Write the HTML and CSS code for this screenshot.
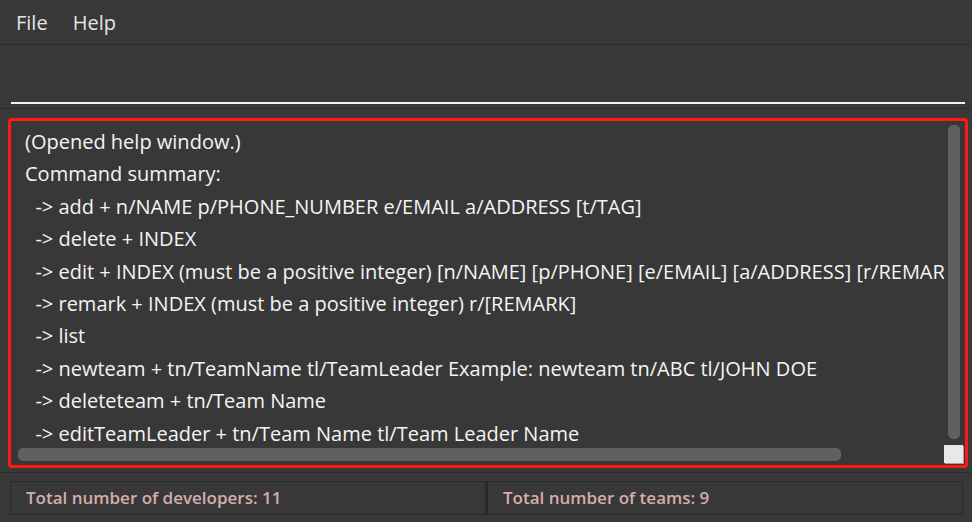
FILE: index.html
```html
<!DOCTYPE html>
<html>
<head>
<meta charset="utf-8">
<link rel="stylesheet" href="styles.css">
</head>
<body>
<div class="app">
  <div class="menubar">
    <span class="menu-item">File</span>
    <span class="menu-item">Help</span>
  </div>
  <div class="command-box">
    <div class="command-input"></div>
  </div>
  <div class="result-box">
    <div class="result-text">(Opened help window.)
Command summary:
  -&gt; add + n/NAME p/PHONE_NUMBER e/EMAIL a/ADDRESS [t/TAG]
  -&gt; delete + INDEX
  -&gt; edit + INDEX (must be a positive integer) [n/NAME] [p/PHONE] [e/EMAIL] [a/ADDRESS] [r/REMARK] [t/TAG]
  -&gt; remark + INDEX (must be a positive integer) r/[REMARK]
  -&gt; list
  -&gt; newteam + tn/TeamName tl/TeamLeader Example: newteam tn/ABC tl/JOHN DOE
  -&gt; deleteteam + tn/Team Name
  -&gt; editTeamLeader + tn/Team Name tl/Team Leader Name</div>
    <div class="vscroll"></div>
    <div class="hscroll"></div>
    <div class="corner"></div>
  </div>
  <div class="statusbar">
    <div class="status-cell">Total number of developers: 11</div>
    <div class="status-cell">Total number of teams: 9</div>
  </div>
</div>
</body>
</html>
```
FILE: styles.css
```css
html, body {
  margin: 0;
  padding: 0;
  background: #383838;
}
.app {
  width: 972px;
  height: 522px;
  display: flex;
  flex-direction: column;
  font-family: "Open Sans", "Noto Sans", sans-serif;
  overflow: hidden;
}
.menubar {
  height: 44px;
  display: flex;
  align-items: center;
  gap: 25px;
  padding-left: 16px;
  border-bottom: 1px solid #2d2d2d;
}
.menu-item {
  color: #e6e6e6;
  font-size: 20px;
}
.command-box {
  height: 63px;
  padding: 0 7px 0 11px;
  border-bottom: 1px solid #2d2d2d;
  display: flex;
  align-items: flex-end;
}
.command-input {
  flex: 1;
  height: 4px;
  border-top: 2px solid #f0f0f0;
}
.result-box {
  position: relative;
  margin: 9px 4px 0 8px;
  height: 344px;
  border: 3px solid #ff1a10;
  border-radius: 4px;
  background: #383838;
  overflow: hidden;
}
.result-text {
  white-space: pre;
  color: #f4f4f4;
  font-size: 20px;
  line-height: 32.4px;
  padding: 5px 0 0 14px;
  width: 919px;
  height: 322px;
  overflow: hidden;
}
.vscroll {
  position: absolute;
  left: 937px;
  top: 4px;
  width: 12px;
  height: 314px;
  background: #606060;
  border-radius: 5px;
}
.hscroll {
  position: absolute;
  left: 7px;
  top: 327px;
  width: 823px;
  height: 13px;
  background: #606060;
  border-radius: 5px;
}
.corner {
  position: absolute;
  left: 933px;
  top: 324px;
  width: 19px;
  height: 18px;
  background: #e8e8e8;
  box-shadow: 1px 1px 0 #a0a0a0;
}
.statusbar {
  margin-top: 4px;
  border-top: 1px solid #2d2d2d;
  padding: 8px 9px 0 10px;
  display: flex;
}
.status-cell {
  flex: 1;
  height: 32px;
  border: 1px solid #2a2a2a;
  color: #d6adad;
  font-weight: 600;
  font-size: 17px;
  line-height: 32px;
  padding-left: 15px;
}
.status-cell + .status-cell {
  border-left: 2px solid #2a2a2a;
}
```
